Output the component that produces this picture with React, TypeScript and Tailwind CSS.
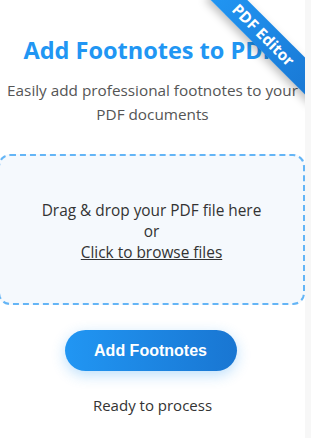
export default function App() {
  return (
    <div className="flex min-h-[438px] w-[311px] bg-[#f7f7f7] font-['Open_Sans',sans-serif]">
      <div className="relative w-[305px] overflow-hidden bg-white">
        {/* ribbon */}
        <div className="absolute right-[-40px] top-[28px] z-10 w-[150px] rotate-45 bg-gradient-to-r from-[#2196f3] to-[#1976d2] py-[3px] pr-[18px] text-center text-[15.5px] font-bold leading-[20px] text-white shadow-[0_4px_8px_rgba(0,0,0,0.25)]">
          PDF Editor
        </div>

        <div className="flex flex-col items-center pt-[34px]">
          <h1 className="pr-[6px] text-[23.5px] font-bold leading-[32px] text-[#2196f3]">Add Footnotes to PDF</h1>
          <p className="mt-[12px] text-center text-[15.3px] leading-[24px] text-[#555]">
            Easily add professional footnotes to your PDF documents
          </p>
        </div>

        <div className="-ml-[2px] mt-[28px] flex h-[151px] w-[307px] flex-col items-center justify-center rounded-[12px] border-2 border-dashed border-[#64b5f6] bg-[#f5f9fd] text-[15.4px] leading-[21px] text-[#333]">
          <div className="pt-[4px] text-center">
            <p>Drag &amp; drop your PDF file here</p>
            <p>or</p>
            <p className="underline">Click to browse files</p>
          </div>
        </div>

        <div className="mt-[25px] flex justify-center pr-[4px]">
          <button className="h-[41px] w-[172px] rounded-full bg-gradient-to-r from-[#2196f3] to-[#1976d2] font-['Liberation_Sans',Arial,sans-serif] text-[16px] font-bold text-white shadow-[0_4px_14px_rgba(33,150,243,0.3)]">
            Add Footnotes
          </button>
        </div>

        <p className="mt-[23px] pb-[20px] text-center text-[15px] text-[#333]">Ready to process</p>
      </div>
      <div className="flex-1" />
    </div>
  );
}
